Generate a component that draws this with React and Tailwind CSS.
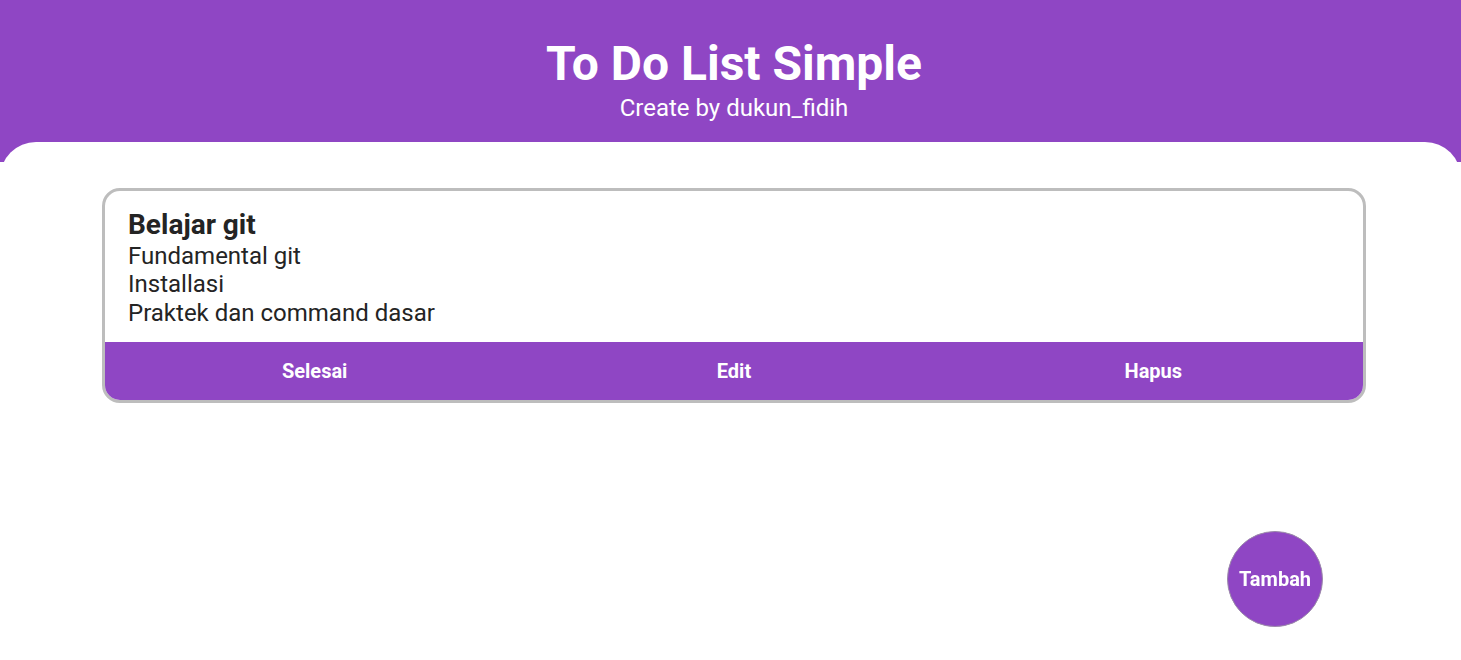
import React from 'react';

const todos = [
  {
    id: 1,
    title: 'Belajar git',
    items: ['Fundamental git', 'Installasi', 'Praktek dan command dasar'],
  },
];

const App = () => {
  return (
    <div className="min-h-screen bg-white font-['Roboto',sans-serif]">
      {/* Header */}
      <header className="h-[162px] bg-[#8f46c4] text-white text-center pt-[33px] pl-[7px]">
        <h1 className="text-[48px] font-bold leading-[62px]">To Do List Simple</h1>
        <p className="text-[24px] leading-[26px]">Create by dukun_fidih</p>
      </header>

      {/* Content */}
      <main className="relative -mt-[20px] bg-white rounded-t-[36px] min-h-[518px] pt-[46px] pl-[102px] pr-[95px]">
        {todos.map((t) => (
          <div key={t.id} className="border-[3px] border-[#bdbdbd] rounded-[18px] overflow-hidden">
            <div className="px-[23px] pt-[15.5px] pb-[15px] text-[#242424]">
              <h3 className="text-[28px] font-bold leading-[35px]">{t.title}</h3>
              {t.items.map((it) => (
                <p key={it} className="text-[24px] leading-[28.5px]">{it}</p>
              ))}
            </div>
            <div className="grid grid-cols-3 bg-[#8f46c4] h-[58px]">
              {['Selesai', 'Edit', 'Hapus'].map((b) => (
                <button key={b} className="text-white font-bold text-[20px]">{b}</button>
              ))}
            </div>
          </div>
        ))}
      </main>

      <button className="fixed right-[138px] bottom-[33px] w-[96px] h-[96px] rounded-full bg-[#8f46c4] border border-[#9a8aa8] text-white font-bold text-[20px] flex items-center justify-center">
        Tambah
      </button>
    </div>
  );
};

export default App;
